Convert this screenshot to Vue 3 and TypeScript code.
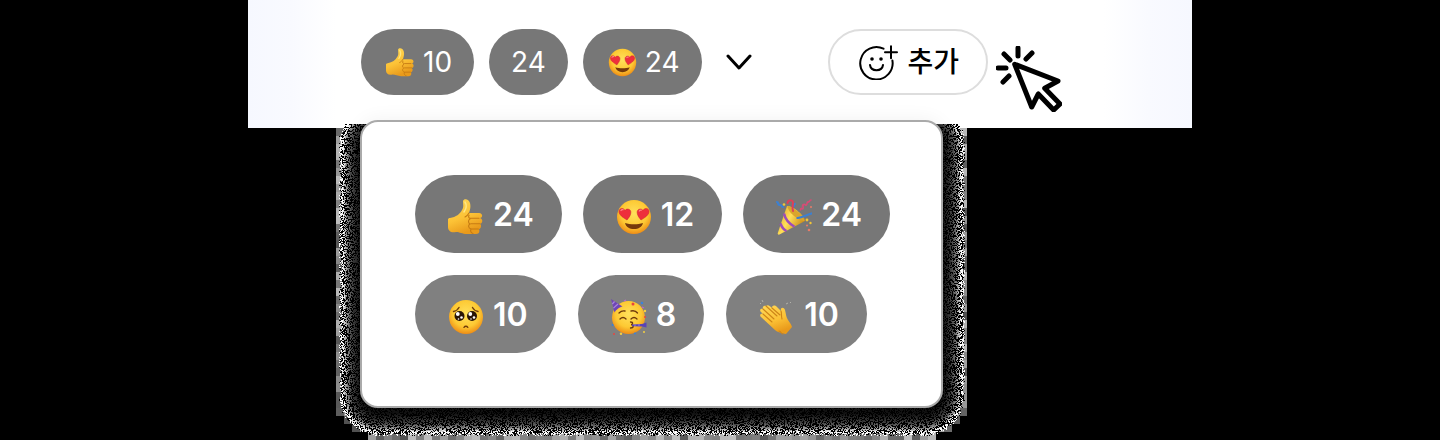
<script setup lang="ts">
import { onMounted, ref } from 'vue'

interface Reaction {
  emoji?: string
  label: string
  count: number
}

const summary: Reaction[] = [
  { emoji: 'thumb', label: '좋아요', count: 10 },
  { label: '반응', count: 24 },
  { emoji: 'love', label: '사랑해요', count: 24 },
]

const trayRows: Reaction[][] = [
  [
    { emoji: 'thumb', label: '좋아요', count: 24 },
    { emoji: 'love', label: '사랑해요', count: 12 },
    { emoji: 'popper', label: '축하해요', count: 24 },
  ],
  [
    { emoji: 'plead', label: '감동이에요', count: 10 },
    { emoji: 'party', label: '신나요', count: 8 },
    { emoji: 'clap', label: '박수', count: 10 },
  ],
]

const open = ref(true)
const grain = ref<HTMLCanvasElement | null>(null)

// Grainy shadow: a rounded box, dropped a little, dithered outwards.
const SPREAD = 25
const RADIUS = 18
const DROP = 2
const BLOCK = 8

function paintGrain(canvas: HTMLCanvasElement) {
  const w = (canvas.width = canvas.offsetWidth)
  const h = (canvas.height = canvas.offsetHeight)
  const ctx = canvas.getContext('2d')
  if (!ctx) return
  let seed = 7
  const rand = () => {
    seed = (seed * 1664525 + 1013904223) >>> 0
    return seed / 4294967296
  }
  const right = w - SPREAD
  const bottom = h - 28
  const distance = (x: number, y: number) => {
    const dx = Math.max(SPREAD + RADIUS - x, 0, x - (right - RADIUS))
    const dy = Math.max(DROP + RADIUS - y, 0, y - (bottom - RADIUS))
    return Math.hypot(dx, dy) - RADIUS
  }
  for (let y = 4; y < h; y += BLOCK) {
    for (let x = 0; x < w; x += BLOCK) {
      const nx = x < w / 2 ? x + BLOCK : x
      const ny = y < h / 2 ? y + BLOCK : y
      const level = Math.round(80 + rand() * 110)
      if (distance(nx, ny) < 20.5) {
        ctx.fillStyle = `rgb(${level},${level},${level})`
        ctx.fillRect(x, y, BLOCK, BLOCK)
      }
    }
  }
  const image = ctx.getImageData(0, 0, w, h)
  for (let y = 0; y < h; y++) {
    for (let x = 0; x < w; x++) {
      const d = distance(x, y)
      if (d > 21 + rand() * 4 - 2) continue
      const t = Math.max(0, d) / 21
      const peak = 18 + 100 * t + 280 * Math.pow(t, 4)
      const level = rand() < 0.48 ? 0 : Math.min(255, peak * (0.7 + rand() * 0.4))
      const i = (y * w + x) * 4
      image.data[i] = image.data[i + 1] = image.data[i + 2] = level
      image.data[i + 3] = 255
    }
  }
  ctx.putImageData(image, 0, 0)
}

onMounted(() => {
  if (grain.value) paintGrain(grain.value)
})
</script>

<template>
  <main class="page">
    <svg class="defs" aria-hidden="true">
      <defs>
        <radialGradient id="face" cx=".5" cy=".4" r=".6">
          <stop offset="0" stop-color="#ffe15c" />
          <stop offset=".65" stop-color="#fdc933" />
          <stop offset="1" stop-color="#ee8d16" />
        </radialGradient>
        <linearGradient id="skin" x1="0" y1="0" x2=".4" y2="1">
          <stop offset="0" stop-color="#ffd95a" />
          <stop offset=".6" stop-color="#fcc236" />
          <stop offset="1" stop-color="#e99a1b" />
        </linearGradient>
        <linearGradient id="gold" x1="0" y1="0" x2="1" y2=".6">
          <stop offset="0" stop-color="#d99a1c" />
          <stop offset=".5" stop-color="#ffdf58" />
          <stop offset="1" stop-color="#c58512" />
        </linearGradient>
        <symbol id="thumb" viewBox="0 0 36 36">
          <path d="M15 2c1-3 6-2 7 2 1 4 0 7-1 10l10 0c4 0 4 5 1 5 3 1 3 5 0 6 2 1 1 5-1 5 1 3 0 5-3 5h-9c-5 0-7-2-11-2-5 1-8-1-8-5-1-4-1-9 2-9 6-1 10-4 12-8 2-3 1-6 1-9z" fill="url(#skin)" />
          <path d="M31 19.300h-8c-2 0-3-1-2-3M32 24.700h-9M30.500 30h-7M21 14c-1 2-2 3-4 4M22 20c-2 1-2 4 0 5-2 1-2 4 1 5-1 2 0 4 2 4.500" fill="none" stroke="#c67b13" stroke-width="1.100" stroke-linecap="round" />
          <path d="M17 3c2 3 1 7-1 10" fill="none" stroke="#ffe783" stroke-width="1.500" stroke-linecap="round" />
        </symbol>
        <symbol id="love" viewBox="0 0 36 36">
          <circle cx="18" cy="18" r="17" fill="url(#face)" />
          <path d="M9 24c5 1.700 13 1.700 18 0-1 4-4.500 6-9 6s-8-2-9-6z" fill="#753a0b" />
          <path d="M11 21C7 18.500 3 16 3 12.500c0-3.500 4.500-4 6-1 2-3 6.500-1 5.800 2.500C14.500 17 12.500 19 11 21z" fill="#ee2f3c" stroke="#c92131" stroke-width=".5" />
          <path d="M25 21c4-2.500 8-5 8-8.500 0-3.500-4.500-4-6-1-2-3-6.500-1-5.800 2.500C21.500 17 23.500 19 25 21z" fill="#ee2f3c" stroke="#c92131" stroke-width=".5" />
          <path d="M5 11.500c.5-.8 1.200-1 2-.8M23.300 12c.5-.8 1.200-1 2-.8" stroke="#ff8584" stroke-width="1.300" stroke-linecap="round" fill="none" />
        </symbol>
        <symbol id="plead" viewBox="0 0 36 36">
          <circle cx="18" cy="18" r="17" fill="url(#face)" />
          <g fill="#291506">
            <circle cx="11.500" cy="17" r="5" />
            <circle cx="24" cy="17" r="5" />
          </g>
          <g fill="#fff">
            <circle cx="9.800" cy="15" r="1.900" />
            <circle cx="22.300" cy="15" r="1.900" />
            <circle cx="13.500" cy="18.500" r="1.300" />
            <circle cx="26" cy="18.500" r="1.300" />
            <circle cx="10.500" cy="20" r=".8" />
            <circle cx="23" cy="20" r=".8" />
          </g>
          <path d="M5.500 12.500c2.500-.5 4.500-2 5.500-4M24.500 8.500c1 2 3 3.500 5.500 4M16 28.300c1-1.500 2.800-1.500 3.800 0" fill="none" stroke="#713c0b" stroke-width="1.400" stroke-linecap="round" />
        </symbol>
        <symbol id="party" viewBox="0 0 36 36">
          <circle cx="17.500" cy="18.500" r="16.500" fill="url(#face)" />
          <path d="M0 0l11.500 7.500C9 8 5 10.500 3.500 13.500z" fill="#6f45b5" />
          <path d="M3.500 2.500L1.300 5M7 5L2.500 9" stroke="#a987dd" stroke-width="1.200" />
          <path d="M9 20c2-2 4-2 6 0M20 20c2-2 4-2 6 0M8 14c2-2 4-2.500 6-2M20 12c2-.5 5 0 6.500 2M19.500 23c3 0 2.500 2.700.5 2.700 3 0 3 3.300-.5 3.300" fill="none" stroke="#6f3a0b" stroke-width="1.300" stroke-linecap="round" />
          <path d="M21 25.500l10-.5L35.500 23.500v5L31 27.500l-10-.3z" fill="#5a44b5" />
          <path d="M24 25.500v1.500M28 25v2.200" stroke="#957cdd" stroke-width="1" />
          <g fill="#e8443f"><circle cx="22" cy="5" r="1.500" /><circle cx="3" cy="35" r="1" /><circle cx="34" cy="18" r="1" /></g>
          <g fill="#3982dc"><circle cx="31" cy="4" r="1.300" /><circle cx="1.500" cy="26" r="1" /><circle cx="24" cy="34.500" r="1" /></g>
          <g fill="#f5cf42"><circle cx="34" cy="12" r="1.200" /><circle cx="10" cy="34.700" r="1.200" /><circle cx="33" cy="33" r="1" /></g>
          <path d="M13 2l2-1M31 8l2 1" stroke="#bd65cd" stroke-width="1.300" />
        </symbol>
        <symbol id="popper" viewBox="0 0 36 36">
          <path d="M11 7c4-1 18 9 18 15L3.500 35.500c-1.500.5-2-.5-1.700-1.500z" fill="url(#gold)" />
          <path d="M8 14.500c1 5 5 10 10.500 13.300M4.500 24.500c1 3 3 6 6 7.500" stroke="#9d4db8" stroke-width="2.500" fill="none" />
          <path d="M11.500 7c5 0 16 9 17 15-6 0-17-9-17-15z" fill="#d9a52c" />
          <path d="M21.500 19c4-.5 8-2.500 14-4.500M1 3c2 0 0 3 3 3s1 2 3 2M19 5c-1 0-2 1-1 2" stroke="#3d80d0" stroke-width="2.200" fill="none" stroke-linecap="round" />
          <path d="M11.500 4c1-4 6-3 5.500 0-.3 2-1 5 0 8" stroke="#df3f58" stroke-width="2" fill="none" stroke-linecap="round" />
          <path d="M24.500 11c0-2 2-2 2-1 1 0 1-3 0-3 0-2 3-2 3-1 2 1 1-4 3-3 2-1 1-2 2.500-2" stroke="#d64c75" stroke-width="1.600" fill="none" stroke-linecap="round" />
          <g fill="#f2c637"><circle cx="8" cy="5.500" r="1.300" /><circle cx="31" cy="21" r="1.400" /><circle cx="34.500" cy="24" r="1.200" /></g>
          <g fill="#e87b67"><circle cx="31" cy="26.500" r="1.100" /><circle cx="33" cy="31" r="1.300" /><circle cx="35" cy="8" r="1" /></g>
        </symbol>
        <symbol id="clap" viewBox="0 0 36 36">
          <path d="M7 7c2-2 4 0 6 2 0-3 3-3 5-1l4 4c-1-4 3-4 4-1 1 4 1 7 3 10 2 3 3 4 4 7l-6 7c-3-1-8-1-11-4L2 18c-2-2 0-4 2-3l-2-2c-2-2 0-4 2-3-1-2 1-4 3-3z" fill="url(#skin)" />
          <path d="M4 10l11 10M7 7l11 10M13 9l8 7M4 15l9 8M22 12c1 3 0 5 1 8M20 32c2 0 2 3 4 3" fill="none" stroke="#ce8518" stroke-width="1.100" stroke-linecap="round" />
          <path d="M3 1l1 2M27 5l2-1M31 4l1-1M1 4l1 1" stroke="#b1b1aa" stroke-width="1" />
        </symbol>
      </defs>
    </svg>

    <section class="band">
      <div class="summary">
        <button
          v-for="(r, i) in summary"
          :key="i"
          class="pill"
          :class="{ plain: !r.emoji }"
          type="button"
          :aria-label="`${r.label} ${r.count}`"
        >
          <svg v-if="r.emoji" class="emoji" aria-hidden="true"><use :href="`#${r.emoji}`" /></svg>
          <span>{{ r.count }}</span>
        </button>
        <button class="toggle" type="button" aria-label="더 보기" :aria-expanded="open" @click="open = !open">
          <svg viewBox="0 0 26 16" width="26" height="16"><path d="M2 2l11 12L24 2" /></svg>
        </button>
      </div>

      <div class="actions">
        <button class="add" type="button">
          <svg viewBox="0 0 40 36" width="40" height="36" aria-hidden="true">
            <path d="M25.500 4.700A16.200 16.200 0 1 0 34.400 16.500M33 2.300v12M27 8.300h12" />
            <path d="M12 21c1 7 12 7 13 0" />
            <circle cx="14" cy="15" r="1.800" /><circle cx="23" cy="15" r="1.800" />
          </svg>
          <span>추가</span>
        </button>
        <svg class="cursor" viewBox="0 0 66 66" aria-hidden="true">
          <path d="M22 2v8M8 8l6 6M36 7l-6 6M2 22h8M13 30l-6 6" />
          <path d="M18.700 18.300L62 35 48.700 42.300 64 58 57.700 64 42.300 48 35.700 61z" />
        </svg>
      </div>

      <div v-show="open" class="tray">
        <canvas ref="grain" class="grain"></canvas>
        <div class="panel">
          <div v-for="(row, i) in trayRows" :key="i" class="row">
            <button v-for="r in row" :key="r.emoji" class="pill large" type="button" :aria-label="`${r.label} ${r.count}`">
              <svg class="emoji" aria-hidden="true"><use :href="`#${r.emoji}`" /></svg>
              <span>{{ r.count }}</span>
            </button>
          </div>
        </div>
      </div>
    </section>
  </main>
</template>

<style>
body {
  margin: 0;
  background: #000;
}
</style>

<style scoped>
.page {
  min-height: 100vh;
  overflow: hidden;
  background: #000;
  font-family: Inter, "Noto Sans CJK KR", sans-serif;
}
.defs {
  position: absolute;
  width: 0;
  height: 0;
}
.band {
  position: relative;
  display: flex;
  justify-content: space-between;
  align-items: flex-start;
  box-sizing: border-box;
  max-width: 944px;
  min-height: 128px;
  margin: 0 auto;
  padding: 29px 130px 0 113px;
  background: linear-gradient(90deg, #f6f8ff 0, #f9faff 44px, #fff 88px, #fff calc(100% - 88px), #f9faff calc(100% - 44px), #f6f8ff 100%);
}
button {
  font: inherit;
  cursor: pointer;
}
.summary {
  display: flex;
  align-items: center;
  gap: 15px;
}
.pill {
  display: flex;
  align-items: center;
  gap: 8px;
  height: 66px;
  padding: 0 22px 0 25px;
  border: 0;
  border-radius: 40px;
  background: #777;
  color: #fff;
  font-size: 28px;
  line-height: 32px;
}
.plain {
  padding: 0 22px;
}
.emoji {
  flex: none;
  width: 29px;
  height: 29px;
}
.toggle {
  display: flex;
  margin-left: 9px;
  padding: 0;
  border: 0;
  background: none;
}
.toggle path,
.add path,
.cursor path {
  fill: none;
  stroke: #000;
  stroke-width: 2;
  stroke-linecap: round;
  stroke-linejoin: round;
}
.toggle path {
  stroke-width: 3;
}
.actions {
  display: flex;
  gap: 8px;
}
.add {
  display: flex;
  align-items: center;
  gap: 9px;
  height: 66px;
  padding: 0 27px 0 28px;
  border: 2px solid #ddd;
  border-radius: 33px;
  background: #fff;
  color: #000;
  font-size: 28px;
  font-weight: 500;
  line-height: 32px;
}
.cursor {
  width: 66px;
  height: 66px;
  margin-top: 17px;
}
.cursor path {
  fill: #fff;
  stroke-width: 5;
}
.tray {
  position: absolute;
  top: 120px;
  left: 112px;
}
.grain {
  position: absolute;
  top: 4px;
  left: -24px;
  width: calc(100% + 48px);
  height: calc(100% + 29px);
}
.panel {
  position: relative;
  display: flex;
  flex-direction: column;
  gap: 22px;
  padding: 53px 51px 53px 53px;
  border: 2px solid #aaa;
  border-radius: 18px;
  background: #fff;
}
.tray::before {
  content: "";
  position: absolute;
  inset: 0;
  border-radius: 18px;
  box-shadow: 0 0 20px rgba(0, 0, 0, 0.06);
}
.row {
  display: flex;
  gap: 21px;
}
.row:last-child {
  gap: 22px;
}
.large {
  gap: 9px;
  height: 78px;
  padding: 2px 28px 0 33px;
  font-size: 32px;
  font-weight: 600;
}
.large .emoji {
  width: 36px;
  height: 36px;
  margin-top: 4px;
}
.row:last-child .large {
  background: #808080;
}
</style>
